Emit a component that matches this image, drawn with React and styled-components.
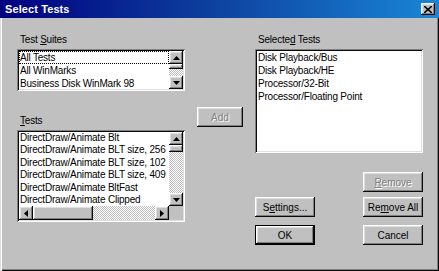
import React from 'react';
import styled, { createGlobalStyle } from 'styled-components';

const GlobalStyle = createGlobalStyle`
  html, body {
    margin: 0;
    padding: 0;
    background: #c0c0c0;
  }
  body {
    font-family: "Liberation Sans", Arial, sans-serif;
    font-size: 10px;
  }
`;

const raised = `
  box-shadow: inset -1px -1px #0a0a0a, inset 1px 1px #ffffff,
    inset -2px -2px #808080, inset 2px 2px #dfdfdf;
`;

const Window = styled.div`
  width: 439px;
  height: 271px;
  display: flex;
  flex-direction: column;
  background: #c0c0c0;
  overflow: hidden;
`;

const TitleBar = styled.div`
  height: 18px;
  flex: none;
  display: flex;
  align-items: center;
  padding: 0 4px 0 5px;
  background: linear-gradient(90deg, #000080 0%, #0c3c9c 45%, #1a86d6 100%);
`;

const Title = styled.span`
  color: #fff;
  font-weight: bold;
  font-size: 11px;
  letter-spacing: 0.1px;
`;

const CloseButton = styled.div`
  margin-left: auto;
  width: 14px;
  height: 12px;
  background: #c0c0c0;
  display: flex;
  align-items: center;
  justify-content: center;
  ${raised}
`;

const Frame = styled.div`
  flex: 1;
  display: flex;
  gap: 12px;
  padding: 16px 0 0 17px;
  box-shadow: inset 1px 0 #dfdfdf, inset 2px 0 #ffffff,
    inset -1px -1px #0a0a0a, inset -2px -2px #808080;
`;

const Column = styled.div`
  width: ${(p) => p.$width}px;
  display: flex;
  flex-direction: column;
  padding-top: ${(p) => p.$top || 0}px;
`;

const Label = styled.div`
  line-height: 12px;
  height: 12px;
  margin: ${(p) => p.$top || 0}px 0 3px 3px;
  color: #000;
  letter-spacing: -0.2px;
`;

const ListBox = styled.div`
  height: ${(p) => p.$height}px;
  background: #fff;
  padding: 2px;
  box-sizing: border-box;
  box-shadow: inset 1px 1px #808080, inset -1px -1px #ffffff,
    inset 2px 2px #0a0a0a, inset -2px -2px #dfdfdf;
  display: grid;
  grid-template-columns: 1fr ${(p) => (p.$vscroll ? '14px' : '')};
  grid-template-rows: 1fr ${(p) => (p.$hscroll ? '14px' : '')};
`;

const Items = styled.div`
  overflow: hidden;
  min-width: 0;
`;

const Row = styled.div`
  line-height: ${(p) => p.$h}px;
  height: ${(p) => p.$h}px;
  padding-left: 1px;
  white-space: nowrap;
  color: #000;
  letter-spacing: -0.2px;
  outline: ${(p) => (p.$focus ? '1px dotted #000' : 'none')};
  outline-offset: -1px;
`;

const VScroll = styled.div`
  display: flex;
  flex-direction: column;
`;

const HScroll = styled.div`
  display: flex;
  grid-column: 1;
`;

const Corner = styled.div`
  background: #c0c0c0;
`;

const Track = styled.div`
  flex: 1;
  background-color: #fff;
  background-image: repeating-conic-gradient(#c0c0c0 0 25%, #ffffff 0 50%);
  background-size: 2px 2px;
`;

const Thumb = styled.div`
  flex: none;
  ${(p) => (p.$vertical ? `height: ${p.$size}px;` : `width: ${p.$size}px;`)}
  background: #c0c0c0;
  ${raised}
`;

const ArrowBtn = styled.div`
  flex: none;
  width: 14px;
  height: ${(p) => (p.$vertical ? 13 : 14)}px;
  background: #c0c0c0;
  display: flex;
  align-items: center;
  justify-content: center;
  ${raised}
`;

const Button = styled.div`
  width: ${(p) => p.$width || 60}px;
  height: 20px;
  box-sizing: border-box;
  display: flex;
  align-items: center;
  justify-content: center;
  background: #c0c0c0;
  color: ${(p) => (p.$disabled ? '#808080' : '#000')};
  text-shadow: ${(p) => (p.$disabled ? '1px 1px #fff' : 'none')};
  ${(p) =>
    p.$default
      ? `box-shadow: inset 0 0 0 1px #000, inset -2px -2px #0a0a0a, inset 2px 2px #ffffff,
    inset -3px -3px #808080, inset 3px 3px #dfdfdf;`
      : raised}
`;

const ButtonArea = styled.div`
  margin-top: 19px;
  display: flex;
  justify-content: space-between;
`;

const ButtonStack = styled.div`
  display: flex;
  flex-direction: column;
  padding-top: ${(p) => p.$top || 0}px;
`;

const Spacer = styled.div`
  height: ${(p) => p.$h}px;
`;

const Arrow = ({ dir }) => {
  const paths = {
    up: 'M3.5 0 L7 4 L0 4 Z',
    down: 'M0 0 L7 0 L3.5 4 Z',
    left: 'M0 3.5 L4 0 L4 7 Z',
    right: 'M0 0 L4 3.5 L0 7 Z',
  };
  const vertical = dir === 'up' || dir === 'down';
  return (
    <svg width={vertical ? 7 : 4} height={vertical ? 4 : 7} viewBox={vertical ? '0 0 7 4' : '0 0 4 7'}>
      <path d={paths[dir]} fill="#000" />
    </svg>
  );
};

const VerticalBar = ({ thumb }) => (
  <VScroll>
    <ArrowBtn $vertical>
      <Arrow dir="up" />
    </ArrowBtn>
    <Thumb $vertical $size={thumb} />
    <Track />
    <ArrowBtn $vertical>
      <Arrow dir="down" />
    </ArrowBtn>
  </VScroll>
);

const suites = ['All Tests', 'All WinMarks', 'Business Disk WinMark 98'];
const tests = [
  'DirectDraw/Animate Blt',
  'DirectDraw/Animate BLT size, 256',
  'DirectDraw/Animate BLT size, 102',
  'DirectDraw/Animate BLT size, 409',
  'DirectDraw/Animate BltFast',
  'DirectDraw/Animate Clipped',
];
const selected = ['Disk Playback/Bus', 'Disk Playback/HE', 'Processor/32-Bit', 'Processor/Floating Point'];

const App = () => (
  <>
    <GlobalStyle />
    <Window>
      <TitleBar>
        <Title>Select Tests</Title>
        <CloseButton>
          <svg width="8" height="7" viewBox="0 0 8 7">
            <path d="M0 0 L8 7 M8 0 L0 7" stroke="#000" strokeWidth="1.6" />
          </svg>
        </CloseButton>
      </TitleBar>
      <Frame>
        <Column $width={168}>
          <Label>
            Test <u>S</u>uites
          </Label>
          <ListBox $height={42} $vscroll>
            <Items>
              {suites.map((s, i) => (
                <Row key={s} $h={13} $focus={i === 0}>
                  {s}
                </Row>
              ))}
            </Items>
            <VerticalBar thumb={5} />
          </ListBox>
          <Label $top={24}>
            <u>T</u>ests
          </Label>
          <ListBox $height={92} $vscroll $hscroll>
            <Items>
              {tests.map((t) => (
                <Row key={t} $h={12.4}>
                  {t}
                </Row>
              ))}
            </Items>
            <VerticalBar thumb={7} />
            <HScroll>
              <ArrowBtn>
                <Arrow dir="left" />
              </ArrowBtn>
              <Thumb $size={60} />
              <Track />
              <ArrowBtn>
                <Arrow dir="right" />
              </ArrowBtn>
            </HScroll>
            <Corner />
          </ListBox>
        </Column>
        <Column $width={46} $top={73}>
          <Button $width={46} $disabled>
            Add
          </Button>
        </Column>
        <Column $width={168}>
          <Label>
            Selecte<u>d</u> Tests
          </Label>
          <ListBox $height={104}>
            <Items>
              {selected.map((s) => (
                <Row key={s} $h={13}>
                  {s}
                </Row>
              ))}
            </Items>
          </ListBox>
          <ButtonArea>
            <ButtonStack $top={25}>
              <Button>
                <span>
                  S<u>e</u>ttings...
                </span>
              </Button>
              <Spacer $h={8} />
              <Button $default>OK</Button>
            </ButtonStack>
            <ButtonStack>
              <Button $disabled>
                <span>
                  <u>R</u>emove
                </span>
              </Button>
              <Spacer $h={5} />
              <Button>
                <span>
                  Re<u>m</u>ove All
                </span>
              </Button>
              <Spacer $h={8} />
              <Button>Cancel</Button>
            </ButtonStack>
          </ButtonArea>
        </Column>
      </Frame>
    </Window>
  </>
);

export default App;
